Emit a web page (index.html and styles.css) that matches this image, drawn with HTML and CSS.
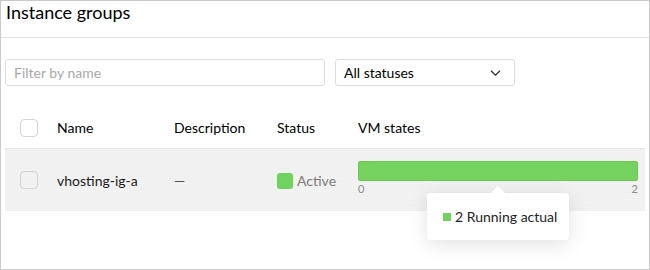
FILE: index.html
```html
<!DOCTYPE html>
<html lang="en">

<head>
    <meta charset="UTF-8">
    <title>Instance groups</title>
    <link rel="stylesheet" href="styles.css">
</head>

<body>
    <div class="frame">
        <!-- Page title -->
        <div class="page-head">
            <h1 class="page-title">Instance groups</h1>
        </div>

        <!-- Filters -->
        <div class="toolbar">
            <input class="filter" type="text" placeholder="Filter by name">
            <div class="select">
                <span>All statuses</span>
                <svg class="chevron" width="11" height="6" viewBox="0 0 11 6">
                    <path d="M1 0.8l4.5 4.4 4.5-4.4" fill="none" stroke="#333" stroke-width="1.3"/>
                </svg>
            </div>
        </div>

        <!-- Table -->
        <div class="table">
            <div class="row head-row">
                <div class="cell"><span class="checkbox"></span></div>
                <div class="cell">Name</div>
                <div class="cell">Description</div>
                <div class="cell">Status</div>
                <div class="cell">VM states</div>
                <div class="cell"></div>
            </div>
            <div class="row data-row">
                <div class="cell"><span class="checkbox"></span></div>
                <div class="cell">vhosting-ig-a</div>
                <div class="cell dash">—</div>
                <div class="cell"><span class="status-dot"></span><span class="status-text">Active</span></div>
                <div class="cell vm-cell">
                    <div class="vm-bar"></div>
                    <div class="vm-axis">
                        <span>0</span>
                        <span>2</span>
                    </div>
                    <div class="tooltip">
                        <span class="tooltip-dot"></span>2 Running actual
                    </div>
                </div>
                <div class="cell"></div>
            </div>
        </div>
    </div>
</body>

</html>
```

FILE: styles.css
```css
body {
    margin: 0px;
    padding: 0px;
    font-family: Lato, "Noto Sans", sans-serif;
    font-size: 14px;
    color: #1a1a1a;
}

.frame {
    width: 650px;
    height: 270px;
    box-sizing: border-box;
    border: 1px solid #c9c9c9;
    padding: 0 4px;
    overflow: hidden;
}

.page-head {
    height: 36px;
    margin: 0 -4px;
    padding: 0 5px;
    border-bottom: 1px solid #e2e2e2;
}

.page-title {
    margin: 0;
    font-size: 18px;
    font-weight: 400;
    line-height: 22px;
    color: #000;
}

.toolbar {
    display: flex;
    gap: 10px;
    margin-top: 21px;
}

.filter {
    width: 320px;
    height: 27px;
    box-sizing: border-box;
    padding: 0 8px;
    border: 1px solid #dcdcdc;
    border-radius: 3px;
    font-family: inherit;
    font-size: 14px;
    outline: none;
}

.filter::placeholder {
    color: #a8a8a8;
}

.select {
    width: 180px;
    height: 27px;
    box-sizing: border-box;
    padding: 0 13px 0 8px;
    border: 1px solid #dcdcdc;
    border-radius: 3px;
    display: flex;
    align-items: center;
    justify-content: space-between;
    color: #000;
}

.table {
    margin-top: 21px;
}

.row {
    display: grid;
    grid-template-columns: 52px 117px 103px 81px 280px 1fr;
    align-items: center;
}

.head-row {
    height: 41px;
    border-bottom: 1px solid #e4e4e4;
    color: #000;
}

.data-row {
    height: 62px;
    background: repeating-linear-gradient(#f3f3f3 0 1px, #efefef 1px 2px);
}

.cell {
    display: flex;
    align-items: center;
}

.cell:first-child {
    padding-left: 15px;
}

.dash {
    color: #555;
}

.checkbox {
    width: 16px;
    height: 16px;
    border: 1px solid #d3d3d3;
    border-radius: 4px;
    background: #fff;
}

.data-row .checkbox {
    background: transparent;
}

.status-dot {
    width: 16px;
    height: 16px;
    border-radius: 3px;
    background: #6ed35f;
    margin: 2px 4px 0 0;
}

.status-text {
    color: #7a7a7a;
}

.vm-cell {
    position: relative;
    flex-direction: column;
    align-items: stretch;
    margin-top: -3px;
}

.vm-bar {
    height: 20px;
    box-sizing: border-box;
    background: #77d35f;
    border: 1px solid #6bc654;
    border-radius: 2px;
}

.vm-axis {
    display: flex;
    justify-content: space-between;
    font-size: 11px;
    line-height: 14px;
    color: #8a8a8a;
    padding-top: 1px;
}

.tooltip {
    position: absolute;
    left: 69px;
    top: 32px;
    width: 142px;
    height: 47px;
    box-sizing: border-box;
    padding-left: 16px;
    display: flex;
    align-items: center;
    background: #fff;
    border-radius: 4px;
    box-shadow: 0 4px 20px rgba(0, 0, 0, 0.12);
    color: #222;
}

.tooltip::before {
    content: "";
    position: absolute;
    left: 66px;
    top: -5px;
    width: 10px;
    height: 10px;
    background: #fff;
    transform: rotate(45deg);
}

.tooltip-dot {
    width: 8px;
    height: 8px;
    background: #6ed35f;
    margin-right: 4px;
}
```
